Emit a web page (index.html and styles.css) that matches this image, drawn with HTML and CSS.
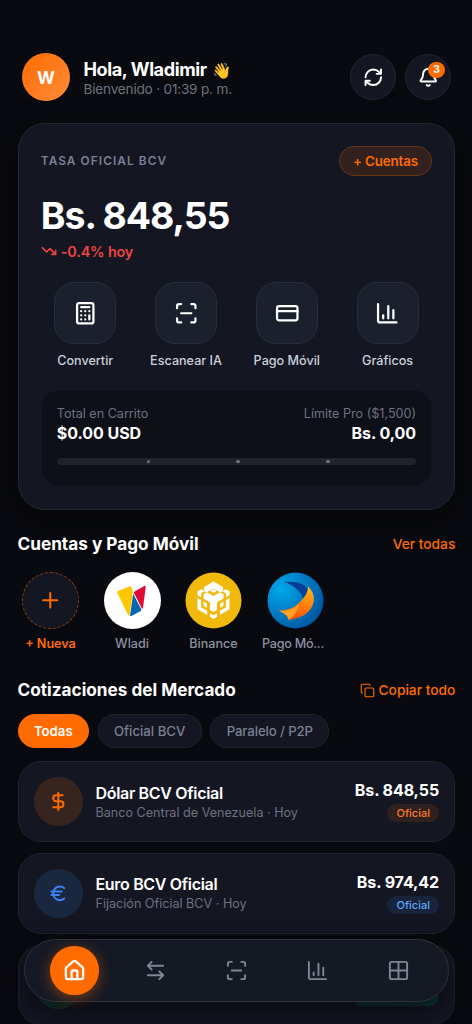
FILE: index.html
```html
<!DOCTYPE html>
<html lang="es">
<head>
<meta charset="utf-8">
<title>Tasa BCV</title>
<link rel="stylesheet" href="styles.css">
</head>
<body>
<svg class="defs" width="0" height="0">
  <symbol id="scan" viewBox="0 0 24 24"><path d="M3 7V5a2 2 0 0 1 2-2h2M17 3h2a2 2 0 0 1 2 2v2M21 17v2a2 2 0 0 1-2 2h-2M7 21H5a2 2 0 0 1-2-2v-2M7 12h10"/></symbol>
  <symbol id="chart" viewBox="0 0 24 24"><path d="M3 3v16a2 2 0 0 0 2 2h16M18 17V9M13 17V5M8 17v-3"/></symbol>
</svg>
<div class="app">
  <header class="header">
    <div class="avatar">W</div>
    <div class="greeting">
      <div class="hello">Hola, Wladimir <span class="wave">👋</span></div>
      <div class="welcome">Bienvenido · 01:39 p. m.</div>
    </div>
    <div class="round-btn"><svg class="icon i20" viewBox="0 0 24 24"><path d="M3 12a9 9 0 0 1 9-9 9.75 9.75 0 0 1 6.74 2.74L21 8M21 3v5h-5M21 12a9 9 0 0 1-9 9 9.75 9.75 0 0 1-6.74-2.74L3 16M8 16H3v5"/></svg></div>
    <div class="round-btn"><svg class="icon i20" viewBox="0 0 24 24"><path d="M10.27 21a2 2 0 0 0 3.46 0M3.26 15.33A1 1 0 0 0 4 17h16a1 1 0 0 0 .74-1.67C19.41 13.96 18 12.5 18 8A6 6 0 0 0 6 8c0 4.5-1.41 5.96-2.74 7.33"/></svg><span class="count">3</span></div>
  </header>

  <section class="card">
    <div class="card-top"><span class="label">TASA OFICIAL BCV</span><span class="add">+ Cuentas</span></div>
    <div class="rate">Bs. 848,55</div>
    <div class="trend"><svg class="icon i16" viewBox="0 0 24 24"><path d="m22 17-8.5-8.5-5 5L2 7M16 17h6v-6"/></svg>-0.4% hoy</div>
    <div class="actions">
      <div class="action"><div class="tile"><svg class="icon i24" viewBox="0 0 24 24"><rect x="4" y="2" width="16" height="20" rx="2"/><path d="M8 6h8M16 14v4M16 10h.01M12 10h.01M8 10h.01M12 14h.01M8 14h.01M12 18h.01M8 18h.01"/></svg></div>Convertir</div>
      <div class="action"><div class="tile"><svg class="icon i24"><use href="#scan"/></svg></div>Escanear IA</div>
      <div class="action"><div class="tile"><svg class="icon i24" viewBox="0 0 24 24"><rect x="2" y="5" width="20" height="14" rx="2"/><path d="M2 10h20"/></svg></div>Pago Móvil</div>
      <div class="action"><div class="tile"><svg class="icon i24"><use href="#chart"/></svg></div>Gráficos</div>
    </div>
    <div class="cart">
      <div class="cart-row muted"><span>Total en Carrito</span><span>Límite Pro ($1,500)</span></div>
      <div class="cart-row total"><span>$0.00 USD</span><span>Bs. 0,00</span></div>
      <div class="progress"><i></i><i></i><i></i></div>
    </div>
  </section>

  <div class="section-head"><h2>Cuentas y Pago Móvil</h2><span class="link">Ver todas</span></div>
  <div class="accounts">
    <div class="account new"><div class="logo dashed"><svg class="icon i24" viewBox="0 0 24 24"><path d="M5 12h14M12 5v14"/></svg></div>+ Nueva</div>
    <div class="account"><div class="logo">
      <svg viewBox="0 0 57 57"><circle cx="28.5" cy="28.5" r="28.5" fill="#fff"/><path d="M13.4 21Q13 19.5 14.3 18.8L25.8 14.2Q26.9 13.8 27.4 14.8L28.9 20L25.6 43.2Q25 44.4 24.2 43.2Z" fill="#fdc800"/><path d="M30 21Q29.7 20 30.6 19.4L40.3 14Q41.9 13.4 41.7 15L39 36Q38.6 37.6 37.6 36Z" fill="#df0b37"/><path d="M29.2 21.8 37.2 37.2Q37.8 38.3 36.8 38.9L27.4 43.9Q25.9 44.3 26.1 42.9Z" fill="#0067b1"/></svg>
    </div>Wladi</div>
    <div class="account"><div class="logo">
      <svg viewBox="0 0 57 57"><circle cx="28.5" cy="28.5" r="28" fill="#f0b90b"/>
        <g fill="#fff"><path d="M28.5 9.5 38 15v4l-2.5 1.5-7-4.1-7 4.1L19 19v-4z"/><path d="M28.5 17 31.8 19 28.5 21 25.2 19z"/><path d="M12.5 19.2 16.2 17.2 19.5 19.2 16.1 21.3V25.2L12.5 23.2zM44.5 19.2 40.8 17.2 37.5 19.2 40.9 21.3V25.2L44.5 23.2z"/><path d="M18.5 22.2 21.9 20.2 28.5 24.1 35.1 20.2 38.5 22.2V26.6L32 30.5V38L28.5 40.1 25 38V30.5L18.5 26.6z"/><path d="M12.5 26 16.1 28.1V35.2L22.2 38.8V43L12.5 37.3zM44.5 26 40.9 28.1V35.2L34.8 38.8V43L44.5 37.3z"/><path d="M18.5 29.6 22 31.7V35.8L18.5 33.7zM38.5 29.6 35 31.7V35.8L38.5 33.7z"/><path d="M25 41.2 28.5 43.2 32 41.2V44.8L28.5 47 25 44.8z"/></g></svg>
    </div>Binance</div>
    <div class="account tight"><div class="logo">
      <svg viewBox="0 0 57 57"><defs><radialGradient id="sky" cx=".25" cy=".3" r=".85"><stop stop-color="#00a8ec"/><stop offset="1" stop-color="#00529d"/></radialGradient><linearGradient id="fire" x1=".7" y1="0" x2=".4" y2="1"><stop stop-color="#ffb31a"/><stop offset="1" stop-color="#ff4b00"/></linearGradient><linearGradient id="navy" x1="0" y1="0" x2="1" y2="1"><stop stop-color="#00368e"/><stop offset="1" stop-color="#004a9f"/></linearGradient></defs><circle cx="28.5" cy="28.5" r="28" fill="url(#sky)"/><path d="M17 10C29 8.5 40 11.5 42 20L36.5 29C36 21 27 13 17 10z" fill="url(#navy)"/><path d="M41 14.5C48.5 21 49 32 41.5 39.5C36 45 29 46.5 22 48C20 42.5 16 39.5 11.5 38.5C24 38.5 31 33 36.5 26C39.5 22 41 19 41 14.5z" fill="url(#fire)"/><path d="M11.5 38.5Q24 40 32 32Q30 42 22 48Q20 42 11.5 38.5z" fill="#ffa126"/></svg>
    </div><span class="cut">Pago Mó...</span></div>
  </div>

  <div class="section-head market"><h2>Cotizaciones del Mercado</h2><span class="link"><svg class="icon i15" viewBox="0 0 24 24"><rect x="8" y="8" width="14" height="14" rx="2"/><path d="M4 16c-1.1 0-2-.9-2-2V4c0-1.1.9-2 2-2h10c1.1 0 2 .9 2 2"/></svg>Copiar todo</span></div>
  <div class="chips"><span class="chip active">Todas</span><span class="chip">Oficial BCV</span><span class="chip slim">Paralelo / P2P</span></div>

  <div class="quotes">
    <div class="quote orange">
      <div class="coin"><svg class="icon i20" viewBox="0 0 24 24"><path d="M12 2v20M17 5H9.5a3.5 3.5 0 0 0 0 7h5a3.5 3.5 0 0 1 0 7H6"/></svg></div>
      <div class="info"><div class="name">Dólar BCV Oficial</div><div class="sub">Banco Central de Venezuela · Hoy</div></div>
      <div class="price"><div class="value">Bs. 848,55</div><span class="tag">Oficial</span></div>
    </div>
    <div class="quote blue">
      <div class="coin"><svg class="icon i20" viewBox="0 0 24 24"><path d="M4 10h12M4 14h9M19 6a7.7 7.7 0 0 0-5.2-2A7.9 7.9 0 0 0 6 12c0 4.4 3.5 8 7.8 8 2 0 3.8-.8 5.2-2"/></svg></div>
      <div class="info"><div class="name">Euro BCV Oficial</div><div class="sub">Fijación Oficial BCV · Hoy</div></div>
      <div class="price"><div class="value">Bs. 974,42</div><span class="tag">Oficial</span></div>
    </div>
    <div class="quote green">
      <div class="coin"></div>
      <div class="info"></div>
      <div class="price"><span class="tag wide"></span></div>
    </div>
  </div>

  <nav class="nav">
    <div class="nav-item current"><svg class="icon i23" viewBox="0 0 24 24"><path d="M15 21v-8a1 1 0 0 0-1-1h-4a1 1 0 0 0-1 1v8"/><path d="M3 10a2 2 0 0 1 .71-1.53l7-6a2 2 0 0 1 2.58 0l7 6A2 2 0 0 1 21 10v9a2 2 0 0 1-2 2H5a2 2 0 0 1-2-2z"/></svg></div>
    <div class="nav-item"><svg class="icon i23" viewBox="0 0 24 24"><path d="M8 3 4 7l4 4M4 7h16M16 21l4-4-4-4M20 17H4"/></svg></div>
    <div class="nav-item"><svg class="icon i23"><use href="#scan"/></svg></div>
    <div class="nav-item"><svg class="icon i23"><use href="#chart"/></svg></div>
    <div class="nav-item"><svg class="icon i23" viewBox="0 0 24 24"><rect x="3" y="3" width="18" height="18" rx="2"/><path d="M3 12h18M12 3v18"/></svg></div>
  </nav>
</div>
</body>
</html>
```
FILE: styles.css
```css
* { box-sizing: border-box; }
body { margin: 0; background: #090a0f; color: #fff; font-family: Inter, "Liberation Sans", sans-serif; }
.defs { position: absolute; }
.app { position: relative; height: 1024px; overflow: hidden; padding: 53px 16.7px 0 17.5px; }
.icon { display: block; flex: none; fill: none; stroke: currentColor; stroke-width: 2.2; stroke-linecap: round; stroke-linejoin: round; }
.i15 { width: 15px; height: 15px; stroke-width: 1.8; }
.i16 { width: 16px; height: 16px; stroke-width: 2.4; }
.i20 { width: 20.6px; height: 20.6px; stroke-width: 2.3; }
.i23 { width: 23px; height: 23px; }
.i24 { width: 24.5px; height: 24.5px; }

.header { display: flex; align-items: center; height: 48px; padding: 0 4.3px 0 4.5px; }
.avatar { width: 48px; height: 48px; border-radius: 50%; display: grid; place-items: center; background: linear-gradient(135deg, #ff6b00, #ff8c3a); font-weight: 700; font-size: 17.2px; }
.greeting { flex: 1; margin-left: 13.5px; padding-top: 1px; }
.hello { font-size: 18.1px; line-height: 22px; font-weight: 700; letter-spacing: -.42px; white-space: nowrap; }
.wave { margin-left: 1.5px; font-family: "Noto Color Emoji", Inter, sans-serif; font-size: 15.5px; font-weight: 400; line-height: 1; }
.welcome { font-size: 13.6px; line-height: 18px; letter-spacing: -.2px; color: #6b7280; }
.round-btn { position: relative; width: 46px; height: 46px; margin-left: 9px; border-radius: 50%; border: 1px solid #24252f; background: #141622; display: grid; place-items: center; }
.count { position: absolute; right: 5px; top: 7px; width: 17px; height: 16px; border-radius: 8px; background: #ff6b00; font-size: 10.3px; line-height: 15px; font-weight: 700; text-align: center; }

.card { margin-top: 22px; height: 387px; padding: 22px 22.3px; border: 1px solid #252631; border-radius: 27px; background: #141622; box-shadow: 0 9px 35px rgba(0,0,0,.42); }
.card-top { display: flex; justify-content: space-between; align-items: center; height: 30px; }
.label { font-size: 11.8px; font-weight: 600; letter-spacing: 1.1px; color: #7b8191; }
.add { height: 30px; padding: 0 13px; border: 1px solid #673514; border-radius: 15px; background: #33211f; color: #ff6b00; font-size: 13.3px; line-height: 28px; font-weight: 600; letter-spacing: -.1px; }
.rate { margin-top: 17px; font-size: 37.4px; line-height: 45px; font-weight: 700; letter-spacing: -1.05px; }
.trend { display: flex; align-items: center; gap: 4px; height: 20px; margin-top: 3px; color: #ef4444; font-size: 14.4px; font-weight: 600; letter-spacing: -.16px; }
.actions { display: grid; grid-template-columns: repeat(4, 1fr); gap: 12px; margin-top: 21px; }
.action { display: flex; flex-direction: column; align-items: center; gap: 8px; font-size: 12.6px; line-height: 18px; font-weight: 500; color: #cbd0da; white-space: nowrap; }
.tile { width: 62px; height: 62px; border-radius: 20px; border: 1px solid #272d38; background: #1b202d; color: #fff; display: grid; place-items: center; }
.cart { margin-top: 20px; height: 96px; padding: 13.5px 15px; border: 1px solid #12141c; border-radius: 18px; background: #0d1017; }
.cart-row { display: flex; justify-content: space-between; }
.muted { color: #6b7280; font-size: 12.6px; line-height: 17px; }
.total { margin-top: 1px; font-size: 16px; line-height: 20px; font-weight: 700; letter-spacing: -.05px; }
.progress { position: relative; display: grid; grid-template-columns: repeat(3, 25%); justify-content: end; align-items: center; height: 7px; margin-top: 15.5px; border-radius: 4px; background: #202329; }
.progress i { width: 3.6px; height: 3.6px; border-radius: 50%; background: #71747a; }

.section-head { display: flex; justify-content: space-between; align-items: center; height: 24px; margin-top: 22px; }
h2 { margin: 0 0 1px; font-size: 17.2px; font-weight: 700; letter-spacing: 0; }
.link { display: flex; align-items: center; gap: 4px; color: #ff6b00; font-size: 13.75px; font-weight: 500; }
.accounts { display: flex; gap: 15.5px; margin-top: 16px; }
.account { width: 66px; display: flex; flex-direction: column; align-items: center; gap: 6px; color: #8b91a0; font-size: 12.6px; line-height: 18px; font-weight: 500; white-space: nowrap; }
.tight { letter-spacing: -.25px; }
.cut { align-self: flex-start; }
.logo { width: 57px; height: 57px; border-radius: 50%; display: grid; place-items: center; }
.logo > svg:not(.icon) { width: 57px; height: 57px; }
.dashed { border: 1px dashed #8a4110; background: #141622; }
.dashed .icon { stroke-width: 2; }
.new { color: #ff6b00; font-weight: 600; }
.market { margin-top: 25px; }

.chips { display: flex; gap: 8.5px; margin-top: 11.5px; }
.chip { height: 34.5px; padding: 0 15.4px; border: 1px solid #20222e; border-radius: 18px; background: #141622; color: #7b8191; font-size: 13.2px; line-height: 32px; font-weight: 500; }
.chip.active { background: #ff6b00; border-color: #ff6b00; color: #fff; font-weight: 600; }
.chip.slim { letter-spacing: -.1px; }

.quotes { display: flex; flex-direction: column; gap: 11px; margin-top: 13px; }
.quote { display: flex; align-items: center; height: 80.8px; padding: 0 15.3px; border: 1px solid #20222c; border-radius: 23px; background: #141622; }
.coin { width: 49px; height: 49px; border-radius: 50%; display: grid; place-items: center; }
.info { flex: 1; margin-left: 12.7px; padding-top: 1.5px; }
.name { font-size: 16px; line-height: 20px; font-weight: 600; letter-spacing: -.32px; }
.sub { font-size: 12.6px; line-height: 19px; color: #6b7280; }
.price { display: flex; flex-direction: column; align-items: flex-end; gap: 4px; }
.value { font-size: 16px; line-height: 20px; font-weight: 700; letter-spacing: -.1px; }
.tag { height: 18px; padding: 0 9px; border-radius: 9px; font-size: 11px; line-height: 18px; font-weight: 500; }
.orange .coin { background: #38241e; color: #ff6b00; }
.orange .tag { background: #30211f; color: #fb7a29; }
.blue .coin { background: #19273f; color: #3b82f6; }
.blue .tag { background: #18243b; color: #60a5fa; }
.green .coin, .green .tag { background: #123330; }
.wide { width: 87px; margin-top: 24px; }

.nav { position: absolute; left: 24px; top: 939px; width: 425px; height: 63px; padding: 0 9px; display: flex; align-items: center; border: 1px solid #2f323c; border-radius: 32px; background: #151924; box-shadow: 0 9px 28px rgba(0,0,0,.6); }
.nav-item { flex: 1; display: flex; align-items: center; justify-content: center; color: #7f8593; }
.nav-item .icon { stroke-width: 2; }
.current { color: #fff; }
.current::before { content: ""; position: absolute; width: 48.5px; height: 48.5px; border-radius: 50%; background: #ff6b00; box-shadow: 0 3px 14px rgba(255,107,0,.45); }
.nav .current .icon { position: relative; stroke-width: 2.4; }
```
